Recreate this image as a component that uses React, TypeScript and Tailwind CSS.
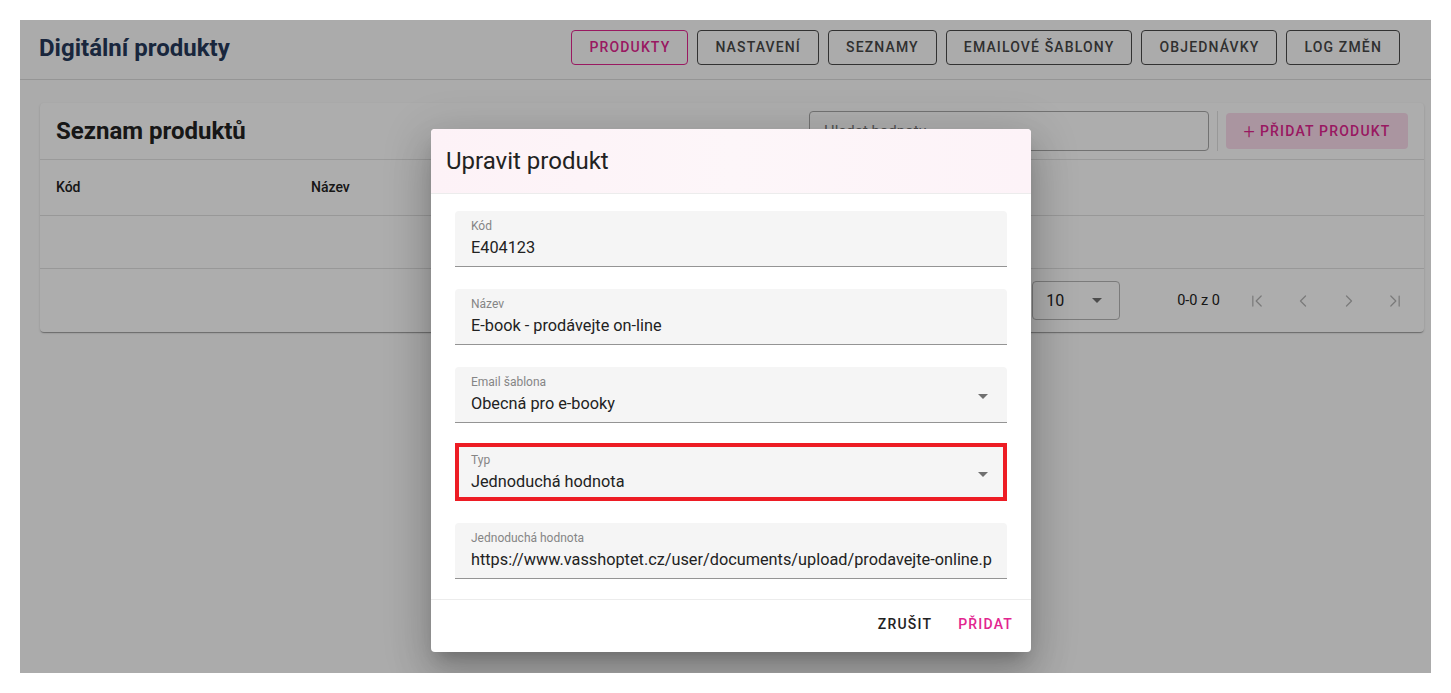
import { ChevronFirst, ChevronLast, ChevronLeft, ChevronRight } from 'lucide-react';

const tabs = ['Produkty', 'Nastavení', 'Seznamy', 'Emailové šablony', 'Objednávky', 'Log změn'];

function Caret({ className = '' }: { className?: string }) {
  return (
    <svg viewBox="0 0 10 5" className={`h-[5px] w-[10px] ${className}`}>
      <path d="M0 0h10L5 5z" fill="currentColor" />
    </svg>
  );
}

interface FieldProps {
  label: string;
  value: string;
  select?: boolean;
  highlighted?: boolean;
}

function Field({ label, value, select, highlighted }: FieldProps) {
  return (
    <div className="relative h-[56px] rounded-t-[4px] border-b border-[#949494] bg-[#f5f5f5] pl-4 pr-[15px] pt-2">
      <div className="text-[12px] leading-[14px] text-[#858585]">{label}</div>
      <div className="mt-[5px] flex items-center justify-between">
        <span className="overflow-hidden whitespace-nowrap text-[16.3px] leading-[20px] text-[#222]">{value}</span>
        {select && <Caret className="-mt-4 mr-1 shrink-0 text-[#707070]" />}
      </div>
      {highlighted && (
        <div className="pointer-events-none absolute -top-[2px] -bottom-px left-0 right-0 border-4 border-[#ed1c24]" />
      )}
    </div>
  );
}

export default function App() {
  return (
    <div className="h-[693px] w-[1451px] bg-white p-5 font-['Roboto','Liberation_Sans',sans-serif]">
      <div className="relative h-[653px] overflow-hidden bg-[#fdfdfd]">
        <header className="flex h-[60px] items-center justify-between border-b border-[#dcdcdc] pl-[19px] pr-[31px]">
          <h1 className="-mt-[4px] text-[24px] font-bold text-[#26395a]">Digitální produkty</h1>
          <nav className="-mt-[5px] flex gap-[9px]">
            {tabs.map((t, i) => (
              <button
                key={t}
                className={`h-[35px] rounded-[4px] border px-[17px] text-[14px] font-medium uppercase tracking-[1.15px] ${
                  i === 0 ? 'border-[#e2258f] text-[#e2258f]' : 'border-[#4a4a4a] text-[#474747]'
                }`}
              >
                {t}
              </button>
            ))}
          </nav>
        </header>

        <main className="pl-5 pt-[23px]">
          <section className="w-[1384px] rounded-[4px] bg-white shadow-[0_2px_1px_-1px_rgba(0,0,0,0.2),0_1px_1px_0_rgba(0,0,0,0.14),0_1px_3px_0_rgba(0,0,0,0.12)]">
            <div className="flex h-[57px] items-center justify-between border-b border-[#e3e3e3] px-4">
              <h2 className="text-[24px] font-bold text-[#222]">Seznam produktů</h2>
              <div className="flex items-center gap-2">
                <div className="flex h-[40px] w-[400px] items-center rounded-[4px] border border-[#a8a8a8] px-[14px] text-[15px] text-[#777]">
                  Hledat hodnotu
                </div>
                <div className="h-[40px] w-px bg-[#e0e0e0]" />
                <button className="flex h-[36px] w-[182px] items-center justify-center gap-1 rounded-[4px] bg-[#fbdcec] text-[14px] font-medium tracking-[1.2px] text-[#e2258f]">
                  <span className="text-[20px] font-light leading-none">+</span>PŘIDAT PRODUKT
                </button>
              </div>
            </div>
            <div className="flex h-[56px] items-center border-b border-[#e0e0e0] px-4 text-[14px] font-medium text-[#222]">
              <div className="w-[255px]">Kód</div>
              <div>Název</div>
            </div>
            <div className="h-[53px] border-b border-[#e0e0e0]" />
            <div className="flex h-[63px] items-center justify-end pr-[19px] text-[14.5px] text-[#222]">
              <div className="flex h-[39px] w-[88px] items-center justify-between rounded-[4px] border border-[#b5b5b5] pl-[13px] pr-[17px] text-[16px]">
                10
                <Caret className="text-[#707070]" />
              </div>
              <span className="ml-[57px]">0-0 z 0</span>
              <div className="ml-[27px] flex items-center gap-[26px] text-[#b5b5b5]">
                <ChevronFirst size={20} strokeWidth={1.5} />
                <ChevronLeft size={20} strokeWidth={1.5} />
                <ChevronRight size={20} strokeWidth={1.5} />
                <ChevronLast size={20} strokeWidth={1.5} />
              </div>
            </div>
          </section>
        </main>

        {/* modal backdrop and dialog */}
        <div className="absolute inset-0 bg-black/[0.32]" />
        <div className="absolute left-[411px] top-[109px] w-[600px] overflow-hidden rounded-[4px] bg-white shadow-[0_11px_15px_-7px_rgba(0,0,0,0.2),0_24px_38px_3px_rgba(0,0,0,0.14),0_9px_46px_8px_rgba(0,0,0,0.12)]">
          <div className="flex h-[65px] items-center border-b border-[#ececec] bg-gradient-to-r from-[#fdf2f7] via-[#fdf6f9] to-[#fdf3f8] px-[15px]">
            <h3 className="text-[24px] text-[#222]">Upravit produkt</h3>
          </div>
          <div className="flex flex-col gap-[22px] px-6 pb-5 pt-[17px]">
            <Field label="Kód" value="E404123" />
            <Field label="Název" value="E-book - prodávejte on-line" />
            <Field label="Email šablona" value="Obecná pro e-booky" select />
            <Field label="Typ" value="Jednoduchá hodnota" select highlighted />
            <Field
              label="Jednoduchá hodnota"
              value="https://www.vasshoptet.cz/user/documents/upload/prodavejte-online.pdf"
            />
          </div>
          <div className="flex h-[53px] items-center justify-end gap-[10px] border-t border-[#ececec] pb-[3px] pr-[10px]">
            <button className="px-2 py-[6px] text-[14px] font-medium tracking-[1.2px] text-[#222]">ZRUŠIT</button>
            <button className="px-2 py-[6px] text-[14px] font-medium tracking-[1.2px] text-[#e2258f]">PŘIDAT</button>
          </div>
        </div>
      </div>
    </div>
  );
}
